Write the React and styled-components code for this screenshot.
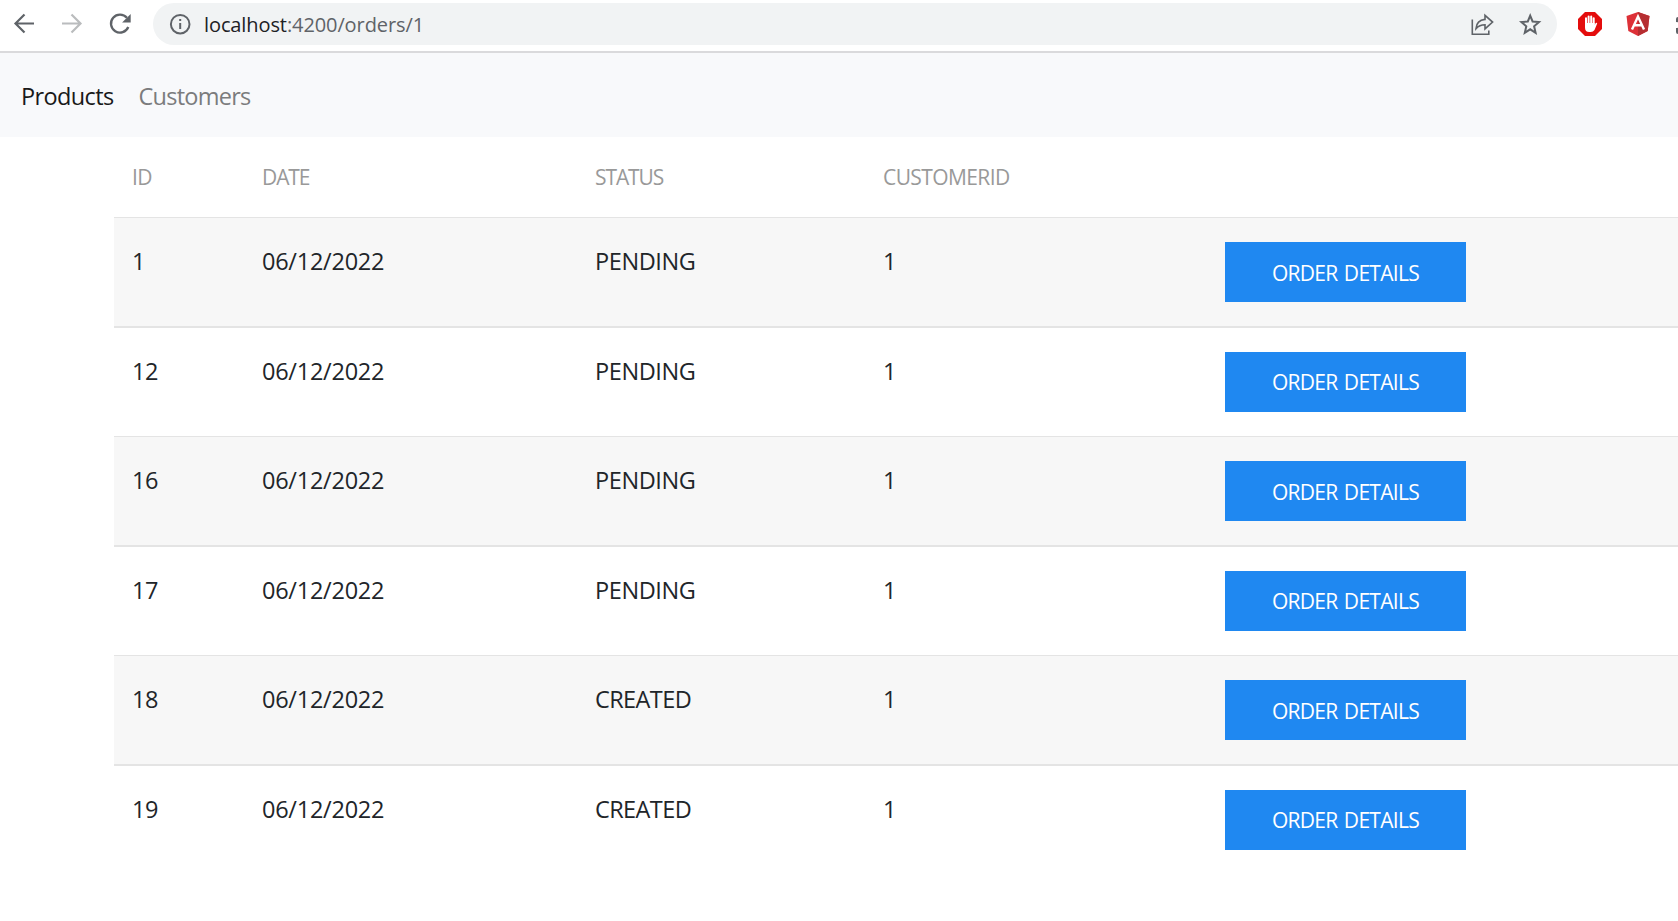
import React from "react";
import styled, { createGlobalStyle } from "styled-components";

const Global = createGlobalStyle`
  * { box-sizing: border-box; }
  html, body { margin: 0; background: #fff; overflow: hidden; }
  body { font-family: "Open Sans", "Noto Sans", sans-serif; color: #212529; }
`;

const Page = styled.div`
  width: 1678px;
  height: 921px;
  overflow: hidden;
  display: flex;
  flex-direction: column;
`;

const BrowserBar = styled.header`
  display: flex;
  align-items: flex-start;
  height: 53px;
  padding-top: 3px;
  border-bottom: 2px solid #dadadc;
  flex: none;
`;

const NavButtons = styled.div`
  display: flex;
  align-items: center;
  gap: 24px;
  height: 42px;
  width: 153px;
  padding-left: 12px;
  flex: none;
  svg { display: block; }
`;

const AddressBar = styled.div`
  display: flex;
  align-items: center;
  width: 1404px;
  height: 42px;
  padding: 0 15px 0 16px;
  border-radius: 21px;
  background: #f1f3f4;
  flex: none;
  svg { display: block; flex: none; }
`;

const Url = styled.div`
  flex: 1;
  padding: 1px 0 0 13px;
  font-size: 20px;
  line-height: 28px;
  letter-spacing: -0.1px;
  color: #5f6368;
  span { color: #202124; }
`;

const AddressActions = styled.div`
  display: flex;
  gap: 24px;
`;

const Extensions = styled.div`
  display: flex;
  align-items: center;
  height: 42px;
  gap: 24px;
  padding-left: 21px;
  width: 121px;
  overflow: hidden;
  svg { flex: none; display: block; }
`;

const Navbar = styled.nav`
  display: flex;
  gap: 25px;
  height: 84px;
  flex: none;
  padding: 26px 0 0 21px;
  background: #f8f9fb;
`;

const NavLink = styled.a`
  font-size: 23.5px;
  line-height: 34px;
  letter-spacing: ${(p) => p.$spacing};
  color: ${(p) => (p.$active ? "#191919" : "#7b7c7d")};
`;

const columns = "130px 333px 288px 342px 1fr";

const Table = styled.div`
  margin-left: 114px;
`;

const HeadRow = styled.div`
  display: grid;
  grid-template-columns: ${columns};
  height: 80px;
  padding: 26px 0 0 18px;
  font-size: 21px;
  line-height: 28px;
  color: #999;
`;

const HeadCell = styled.div`
  letter-spacing: ${(p) => p.$spacing};
`;

const Row = styled.div`
  display: grid;
  grid-template-columns: ${columns};
  height: ${(p) => (p.$striped ? 109 : 110)}px;
  padding: 24px 0 0 18px;
  border-top: ${(p) => (p.$striped ? 1 : 2)}px solid #e4e4e4;
  background: ${(p) => (p.$striped ? "#f7f7f7" : "#fff")};
`;

const Cell = styled.div`
  padding-top: 2px;
  font-size: 23.5px;
  line-height: 34px;
  letter-spacing: ${(p) => p.$spacing || "-0.4px"};
`;

const DetailsButton = styled.button`
  width: 241px;
  height: 60px;
  margin: 0;
  padding: ${(p) => (p.$raised ? 0 : 2)}px 0 0;
  border: 0;
  border-radius: 0;
  background: #1f88f1;
  color: #fff;
  font: 400 21px/28px "Open Sans", "Noto Sans", sans-serif;
  letter-spacing: -0.7px;
  word-spacing: 1.5px;
`;

const BackIcon = () => (
  <svg width="24" height="24" viewBox="0 0 24 24" fill="none" stroke="#5f6368" strokeWidth="2.2">
    <path d="M22 11.500H3.500M12.500 2.500l-9 9 9 9" />
  </svg>
);
const ForwardIcon = () => (
  <svg width="24" height="24" viewBox="0 0 24 24" fill="none" stroke="#babcbe" strokeWidth="2.2">
    <path d="M2 11.500h18.500M11.500 2.500l9 9-9 9" />
  </svg>
);
const ReloadIcon = () => (
  <svg width="24" height="24" viewBox="0 0 24 24">
    <path d="M20.300 15a9 9 0 1 1-1.400-9.200" fill="none" stroke="#5f6368" strokeWidth="2.300" />
    <path d="M22.700 2v8.600h-8.600z" fill="#5f6368" />
  </svg>
);
const InfoIcon = () => (
  <svg width="22" height="22" viewBox="0 0 22 22">
    <circle cx="11.200" cy="11.200" r="9.300" fill="none" stroke="#5f6368" strokeWidth="2" />
    <path d="M10.200 6h2v2h-2zM10.200 10h2v6h-2z" fill="#5f6368" />
  </svg>
);
const ShareIcon = () => (
  <svg width="24" height="24" viewBox="0 0 24 24" fill="none" stroke="#5f6368" strokeWidth="1.600">
    <path d="M2.300 7.500v14.800h16.500V18.500" />
    <path d="M6 16.600c.4-5.400 3.200-8.700 9-9.200V3.300l7.600 6.800-7.600 6.800v-4.200c-4 0-6.600 1.200-9 3.900z" />
  </svg>
);
const StarIcon = () => (
  <svg width="24" height="24" viewBox="0 0 24 24" fill="none" stroke="#5f6368" strokeWidth="2">
    <path d="M12.200 3.600l2.400 5.900 6.400.5-4.900 4.300 1.500 6.500-5.400-3.500-5.400 3.500 1.500-6.500-4.900-4.300 6.400-.5z" />
  </svg>
);
const BlockIcon = () => (
  <svg width="24" height="24" viewBox="0 0 24 24">
    <path d="M7 0h10l7 7v10l-7 7H7l-7-7V7z" fill="#e40d0d" />
    <g stroke="#fff" strokeWidth="2" strokeLinecap="round" fill="none">
      <path d="M8 12V6.200M10.600 11V4.400M13.200 11V4.400M15.700 12V6.200" />
    </g>
    <path d="M7 11h9.700v2l1-1.900q1.200-.8 1.500.4l-2.700 6.500q-1.200 2-3.800 2h-1.500q-4.200 0-4.200-4.500z" fill="#fff" />
  </svg>
);
const AngularIcon = () => (
  <svg width="24" height="24" viewBox="0 0 24 24">
    <path d="M12 0l11.500 4-1.800 15L12 24 2.300 19 .5 4z" fill="#dd3138" />
    <path d="M12 0l11.500 4-1.800 15L12 24z" fill="#b52e31" />
    <path d="M6 17.500 12 4.500l6 13M8.500 13.300h7" fill="none" stroke="#fff" strokeWidth="2.400" />
  </svg>
);
const PuzzleIcon = () => (
  <svg width="24" height="24" viewBox="0 0 24 24">
    <path d="M4 5h5a3 3 0 0 1 6 0h5v5a3 3 0 0 1 0 6v6H4q-2 0-2-2v-4q4 0 4-3t-4-3V7q0-2 2-2z" fill="#5f6368" />
  </svg>
);

const orders = [
  [1, "PENDING"],
  [12, "PENDING"],
  [16, "PENDING"],
  [17, "PENDING"],
  [18, "CREATED"],
  [19, "CREATED"],
];

export default function App() {
  return (
    <Page>
      <Global />
      <BrowserBar>
        <NavButtons><BackIcon /><ForwardIcon /><ReloadIcon /></NavButtons>
        <AddressBar>
          <InfoIcon />
          <Url><span>localhost</span>:4200/orders/1</Url>
          <AddressActions><ShareIcon /><StarIcon /></AddressActions>
        </AddressBar>
        <Extensions><BlockIcon /><AngularIcon /><PuzzleIcon /></Extensions>
      </BrowserBar>
      <Navbar>
        <NavLink $active $spacing="-0.62px">Products</NavLink>
        <NavLink $spacing="-0.75px">Customers</NavLink>
      </Navbar>
      <Table>
        <HeadRow>
          <HeadCell $spacing="-0.7px">ID</HeadCell>
          <HeadCell $spacing="-1.1px">DATE</HeadCell>
          <HeadCell $spacing="-1.1px">STATUS</HeadCell>
          <HeadCell $spacing="-0.6px">CUSTOMERID</HeadCell>
        </HeadRow>
        {orders.map(([id, status], i) => (
          <Row key={id} $striped={i % 2 === 0}>
            <Cell>{id}</Cell>
            <Cell $spacing="-0.25px">06/12/2022</Cell>
            <Cell $spacing={status === "PENDING" ? "-0.4px" : "-0.6px"}>{status}</Cell>
            <Cell>1</Cell>
            <DetailsButton $raised={i % 2 === 1}>ORDER DETAILS</DetailsButton>
          </Row>
        ))}
      </Table>
    </Page>
  );
}
